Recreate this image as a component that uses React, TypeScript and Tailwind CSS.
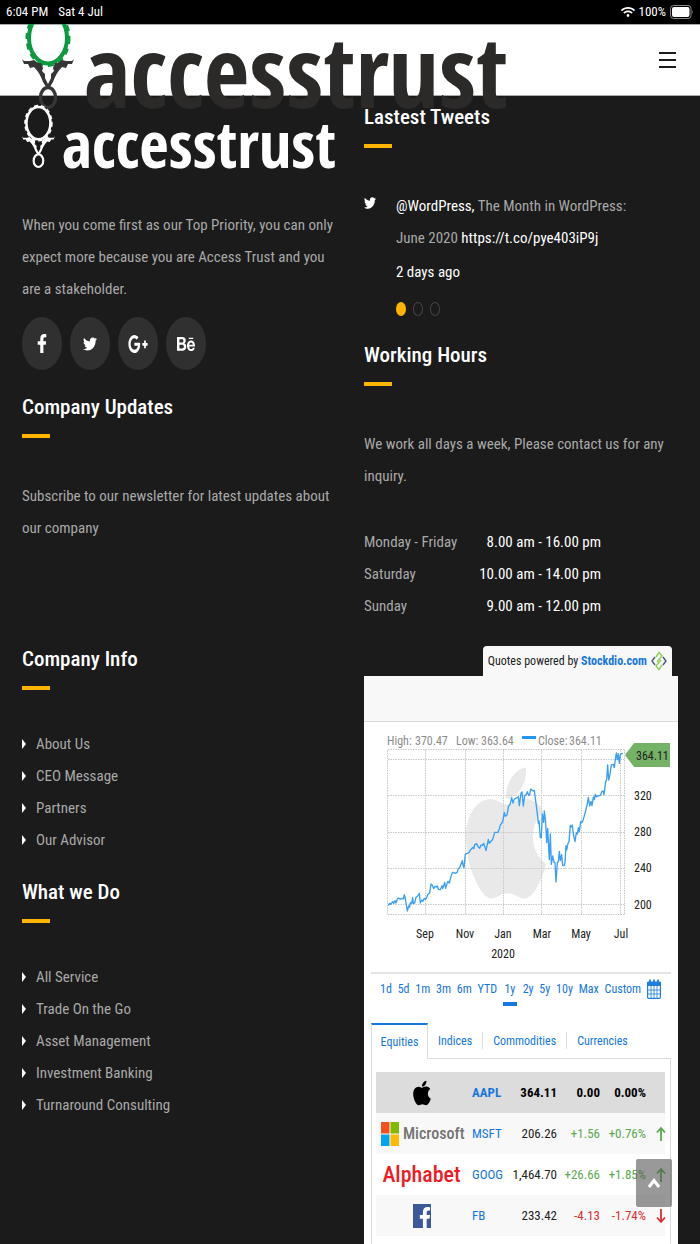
import {
  FaApple,
  FaBehance,
  FaFacebookF,
  FaGooglePlusG,
  FaTwitter,
  FaWifi,
} from "react-icons/fa";
import type { ReactNode } from "react";

type EmblemProps = { ring: string; arms: string; className: string };

function Emblem({ ring, arms, className }: EmblemProps) {
  return (
    <svg viewBox="0 0 52 100" className={className} aria-hidden="true">
      <ellipse cx="26" cy="28" rx="19" ry="25.500" fill="none" stroke={ring} strokeWidth="4" />
      <ellipse cx="26" cy="28" rx="20.500" ry="27" fill="none" stroke={ring} strokeWidth="4" strokeDasharray="6 4.500" />
      <path
        d="M0 49 L2 51 L8 51 L12 50 L16 53 L19 53 L21 58 L20 61 L23 64 L23 68 L26 74 L29 68 L29 64 L32 61 L31 58 L33 53 L36 53 L40 50 L44 51 L50 51 L52 49 L50 54 L46 54 L44 58 L40 57 C36 61 33 66 31 72 L28 77 L26 79 L24 77 L21 72 C19 66 16 61 12 57 L8 58 L6 54 L2 54 Z"
        fill={arms}
      />
      <ellipse cx="26" cy="87.500" rx="7.600" ry="10" fill="none" stroke={arms} strokeWidth="3.400" />
    </svg>
  );
}

function SectionTitle({ children }: { children: ReactNode }) {
  return (
    <div>
      <h2 className="text-[21px] leading-[34px] font-medium text-white">{children}</h2>
      <div className="mt-2.5 h-1 w-7 bg-[#ffb400]" />
    </div>
  );
}

function LinkList({ items }: { items: string[] }) {
  return (
    <ul className="mt-[38px]">
      {items.map((item) => (
        <li key={item} className="leading-8">
          <a href="#" className="flex items-center gap-2.5">
            <svg viewBox="0 0 4 10" className="h-2.5 w-1" aria-hidden="true">
              <path d="M0 0 L4 5 L0 10 Z" fill="#fff" />
            </svg>
            {item}
          </a>
        </li>
      ))}
    </ul>
  );
}

const socials = [
  { name: "Facebook", icon: <FaFacebookF preserveAspectRatio="none" className="h-[19px] w-2.5" /> },
  { name: "Twitter", icon: <FaTwitter preserveAspectRatio="none" className="h-4 w-3.5" /> },
  { name: "Google Plus", icon: <FaGooglePlusG preserveAspectRatio="none" className="h-6 w-5" /> },
  { name: "Behance", icon: <FaBehance preserveAspectRatio="none" className="h-5 w-[18px]" /> },
];

const hours = [
  ["Monday - Friday", "8.00 am - 16.00 pm"],
  ["Saturday", "10.00 am - 14.00 pm"],
  ["Sunday", "9.00 am - 12.00 pm"],
];

const rise =
  "12,481 17,475 20,478 26,470 29,475 33,467 36,474 40,462 44,459 49,463 53,460 58,462 61,449 64,462 67,480 70,498 74,483 77,486 79,473 83,476 86,458 88,475 92,474 96,457 101,453 106,445 109,474 113,465 117,469 121,460 124,463 127,460 132,448 137,444 141,417 145,421 149,431 153,424 157,426 160,423 163,433 169,434 174,422 176,431 182,412 185,430 190,413 192,409 196,414 199,401 204,385 208,382 213,385 219,383 223,371 227,368 235,347 237,360 240,368 244,327 250,325 255,323 260,314 267,307 270,311 272,299 278,296 283,306 287,310 291,300 295,302 299,295 304,309 306,317 313,283 316,295 322,288 326,283 332,262 342,262 347,249 348,242";

const slump =
  "348,242 352,236 356,230 361,202 364,214 369,210 374,182 378,179 383,158 387,174 391,162 395,160 399,158 403,155 406,182 411,144 414,141 418,183 422,151 427,149 430,140 434,151 437,150 440,132 444,136 448,138 451,136 454,161 457,183 460,206 463,236 465,228 469,278 472,278 475,207 479,232 481,198 485,232 488,293 491,250 496,344 499,267 502,358 506,333 510,352 513,353 516,411 520,353 523,350 526,319 529,347 533,329 536,361 540,362 543,353 546,302 548,315 552,295 555,290 559,241 562,246 565,240 568,267 573,290 577,263 580,267 583,248 586,260 590,230 595,232 599,219 603,205 609,181 613,157 617,183 621,169 624,182 628,156 631,164 634,148 637,156 641,152 645,153 650,150 653,140 657,138 660,149 665,110 668,104 671,60 674,105 678,88 682,60 688,58 691,68 694,43 697,24 700,44 703,26 706,55 709,30 712,26 717,26";

const months = [
  [425, "Sep"],
  [465, "Nov"],
  [503, "Jan"],
  [542, "Mar"],
  [581, "May"],
  [621, "Jul"],
] as const;

function PriceChart() {
  return (
    <svg viewBox="364 722 314 250" className="block w-full text-[12px]" role="img" aria-label="AAPL one year price chart">
      <FaApple x="465" y="758" className="h-[150px] w-[82px]" preserveAspectRatio="none" color="#e9e9e9" />
      <g stroke="#c8c8c8" strokeDasharray="1.500 1" fill="none">
        <path d="M388 749.500H625M388 759.500H625M388 795.500H625M388 832.500H625M388 868.500H625M388 904.500H625M388 914.500H625" />
        <path d="M387.500 750V914M425.500 750V914M465.500 750V914M503.500 750V914M541.500 750V914M581.500 750V914M620.500 750V914M624.500 750V914" />
      </g>
      <g transform="translate(384 745) scale(0.33333)" fill="none" stroke="#3b9ff5" strokeWidth="4" strokeLinejoin="round">
        <polyline points={rise} />
        <polyline points={slump} />
      </g>
      <g fill="#8c8c8c">
        <text x="387" y="745">High:</text>
        <text x="415" y="745">370.47</text>
        <text x="456" y="745">Low:</text>
        <text x="481" y="745">363.64</text>
        <path d="M522 736h14v3h-14z" fill="#2196f3" />
        <text x="538" y="745">Close:</text>
        <text x="569" y="745">364.11</text>
      </g>
      <path d="M625 755 L634 743 H670 V767 H634 Z" fill="#74b266" />
      <g fill="#222">
        <text x="636" y="760">364.11</text>
        <text x="634" y="800">320</text>
        <text x="634" y="836">280</text>
        <text x="634" y="872">240</text>
        <text x="634" y="909">200</text>
        {months.map(([x, label]) => (
          <text key={label} x={x} y="938" textAnchor="middle">
            {label}
          </text>
        ))}
        <text x="503" y="958" textAnchor="middle">
          2020
        </text>
      </g>
    </svg>
  );
}

const ranges = ["1d", "5d", "1m", "3m", "6m", "YTD", "1y", "2y", "5y", "10y", "Max", "Custom"];

function CalendarIcon() {
  return (
    <svg viewBox="0 0 14 20" className="h-5 w-3.5" fill="none" stroke="#1e7fe0" aria-hidden="true">
      <path d="M0 3h14v4H0z" fill="#1e7fe0" stroke="none" />
      <rect x="0.600" y="3" width="12.800" height="16.300" rx="1" strokeWidth="1.200" />
      <path d="M4 7v12M7 7v12M10 7v12M1 11h12M1 15h12" strokeWidth="0.800" />
      <path d="M3 0.500v4M11 0.500v4M7 0.500v4" strokeWidth="1.800" />
    </svg>
  );
}

function StockdioMark() {
  return (
    <svg viewBox="0 0 16 20" className="h-5 w-4" fill="none" strokeWidth="1.400" aria-hidden="true">
      <path d="M4 6 L1 10 L4 14 M12 6 L15 10 L12 14" stroke="#47597a" />
      <path d="M5 6 L8 1.500 L11 5 L6 11 M11 14 L8 18.500 L5 15 L10 9" stroke="#8fd14f" />
    </svg>
  );
}

function Arrow({ down = false }: { down?: boolean }) {
  return (
    <svg viewBox="0 0 10 16" className="h-4 w-2.5" fill="none" stroke={down ? "#d63031" : "#5aa94e"} strokeWidth="1.800" aria-label={down ? "Down" : "Up"} role="img">
      {down ? <path d="M5 1V14M1 9.500L5 14L9 9.500" /> : <path d="M5 15V2M1 6.500L5 2L9 6.500" />}
    </svg>
  );
}

function QuoteTable() {
  return (
    <table className="w-full table-fixed text-[13px] whitespace-nowrap text-[#222]">
      <colgroup>
        <col className="w-[91px]" />
        <col className="w-11" />
        <col className="w-[46px]" />
        <col className="w-[43px]" />
        <col className="w-[46px]" />
        <col />
      </colgroup>
      <tbody>
        <tr className="h-[41px] bg-[#dcdcdc] font-bold text-black">
          <td>
            <FaApple preserveAspectRatio="none" className="mx-auto h-7 w-[18px]" />
          </td>
          <td className="pl-[5px] text-[#1577dd]">AAPL</td>
          <td className="text-right">364.11</td>
          <td className="text-right">0.00</td>
          <td className="text-right">0.00%</td>
          <td />
        </tr>
        <tr className="h-[41px] bg-[#f8f8f8]">
          <td>
            <div className="flex items-center gap-1 pl-[5px]">
              <svg viewBox="0 0 18 24" className="h-6 w-[18px] shrink-0" aria-hidden="true">
                <path d="M0 0h8.500v11.500H0z" fill="#f25022" />
                <path d="M9.500 0H18v11.500H9.500z" fill="#7fba00" />
                <path d="M0 12.500h8.500V24H0z" fill="#00a4ef" />
                <path d="M9.500 12.500H18V24H9.500z" fill="#ffb900" />
              </svg>
              <span className="text-[16px] leading-6 font-medium text-[#737373]">Microsoft</span>
            </div>
          </td>
          <td className="pl-[5px] text-[#1577dd]">MSFT</td>
          <td className="text-right">206.26</td>
          <td className="text-right text-[#5aa94e]">+1.56</td>
          <td className="text-right text-[#5aa94e]">+0.76%</td>
          <td className="pl-2.5">
            <Arrow />
          </td>
        </tr>
        <tr className="h-[41px]">
          <td className="text-center text-[22px] leading-6 font-medium text-[#ed1c24]">Alphabet</td>
          <td className="pl-[5px] text-[#1577dd]">GOOG</td>
          <td className="text-right">1,464.70</td>
          <td className="text-right text-[#5aa94e]">+26.66</td>
          <td className="text-right text-[#5aa94e]">+1.85%</td>
          <td className="pl-2.5">
            <Arrow />
          </td>
        </tr>
        <tr className="h-[41px] bg-[#f8f8f8]">
          <td>
            <div className="mx-auto flex h-6 w-[18px] items-end justify-end bg-[#3b5998] text-white">
              <FaFacebookF preserveAspectRatio="none" className="h-[21px] w-3" />
            </div>
          </td>
          <td className="pl-[5px] text-[#1577dd]">FB</td>
          <td className="text-right">233.42</td>
          <td className="text-right text-[#d63031]">-4.13</td>
          <td className="text-right text-[#d63031]">-1.74%</td>
          <td className="pl-2.5">
            <Arrow down />
          </td>
        </tr>
      </tbody>
    </table>
  );
}

function StockWidget() {
  return (
    <section className="mt-6 flex grow flex-col text-[#222]">
      <div className="mr-1.5 flex h-[30px] items-center gap-1 self-end rounded-t-[4px] bg-[#f8f8f8] px-[5px] text-[12px]">
        <span>
          Quotes powered by{" "}
          <a href="#" className="font-bold text-[#1577dd]">
            Stockdio.com
          </a>
        </span>
        <StockdioMark />
      </div>
      <div className="flex grow flex-col bg-white">
        <div className="h-[46px] border-b border-[#d8d8d8] bg-[#f8f8f8]" />
        <PriceChart />
        <div className="mx-[7px] border-t-2 border-[#e4e4e4]" />
        <div className="flex h-[49px] items-start justify-between pt-[5px] pr-[17px] pl-4 text-[12px] leading-5 text-[#1577dd]">
          {ranges.map((range) => (
            <button key={range} className="flex flex-col items-center gap-[3px]">
              {range}
              {range === "1y" && <span className="h-1 w-3.5 bg-[#1577dd]" />}
            </button>
          ))}
          <button aria-label="Pick dates">
            <CalendarIcon />
          </button>
        </div>
        <div className="mx-[7px] flex h-9 text-[12px] text-[#1577dd]" role="tablist">
          <button role="tab" aria-selected="true" className="w-[57px] border-x border-t-2 border-x-[#dcdcdc] border-t-[#1577dd]">
            Equities
          </button>
          <div className="flex grow items-center border-b border-[#dcdcdc]">
            <button role="tab" className="h-[17px] border-r border-[#dcdcdc] px-2.5 leading-4">
              Indices
            </button>
            <button role="tab" className="h-[17px] border-r border-[#dcdcdc] px-2.5 leading-4">
              Commodities
            </button>
            <button role="tab" className="h-[17px] px-2.5 leading-4">
              Currencies
            </button>
          </div>
        </div>
        <div className="mx-[7px] grow border-x border-[#dcdcdc] pt-[13px] pr-[5px] pb-[7px] pl-1">
          <QuoteTable />
        </div>
      </div>
    </section>
  );
}

export default function App() {
  return (
    <div className="flex min-h-screen flex-col bg-[#1b1b1b] font-['Roboto_Condensed','Roboto','Liberation_Sans',sans-serif] text-[15px] text-[#a9a9a9]">
      <div className="relative z-20 flex h-6 items-center justify-between bg-black px-1.5 text-[13px] text-white">
        <div className="flex gap-2.5">
          <span>6:04 PM</span>
          <span>Sat 4 Jul</span>
        </div>
        <div className="flex items-center gap-1">
          <FaWifi className="h-3.5 w-3.5" />
          <span>100%</span>
          <svg viewBox="0 0 24 14" className="h-3.5 w-6" aria-hidden="true">
            <rect x="0.500" y="0.500" width="20.500" height="13" rx="3" fill="none" stroke="#888" />
            <rect x="2" y="2" width="17.500" height="10" rx="2" fill="#fff" />
            <path d="M22 5 q1.500 2 0 4z" fill="#888" />
          </svg>
        </div>
      </div>

      <header className="relative flex h-[72px] items-center justify-end border-t border-b border-[#aaa] bg-white pr-6">
        <a href="#" aria-label="accesstrust home" className="absolute -top-[15px] left-[22px] flex h-[100px] text-[#2b2a29]">
          <Emblem ring="#0a9a3f" arms="#363636" className="h-[100px] w-[52px]" />
          <span className="ml-2.5 font-['Open_Sans_Condensed','Roboto_Condensed',sans-serif] text-[99px] leading-[120px] font-bold">accesstrust</span>
        </a>
        <button aria-label="Open menu" className="flex w-[17px] flex-col gap-[5px]">
          <span className="h-0.5 bg-[#1b1b1b]" />
          <span className="h-0.5 bg-[#1b1b1b]" />
          <span className="h-0.5 bg-[#1b1b1b]" />
        </button>
      </header>

      <main className="relative grid grow grid-cols-2 gap-7 px-[22px]">
        <div className="pt-2">
          <a href="#" aria-label="accesstrust" className="flex h-[66px] text-white">
            <Emblem ring="#fff" arms="#fff" className="h-[66px] w-[34px]" />
            <span className="ml-[7px] font-['Open_Sans_Condensed','Roboto_Condensed',sans-serif] text-[64px] leading-[80px] font-bold">accesstrust</span>
          </a>
          <p className="mt-[39px] leading-8">
            When you come first as our Top Priority, you can only expect more because you are Access Trust and you are a stakeholder.
          </p>
          <div className="mt-3 flex gap-2">
            {socials.map(({ name, icon }) => (
              <a key={name} href="#" aria-label={name} className="flex h-[53px] w-10 items-center justify-center rounded-[50%] bg-[#303030] text-white">
                {icon}
              </a>
            ))}
          </div>
          <div className="mt-5">
            <SectionTitle>Company Updates</SectionTitle>
            <p className="mt-[42px] leading-8">Subscribe to our newsletter for latest updates about our company</p>
          </div>
          <div className="mt-[98px]">
            <SectionTitle>Company Info</SectionTitle>
            <LinkList items={["About Us", "CEO Message", "Partners", "Our Advisor"]} />
          </div>
          <div className="mt-[19px]">
            <SectionTitle>What we Do</SectionTitle>
            <LinkList items={["All Service", "Trade On the Go", "Asset Management", "Investment Banking", "Turnaround Consulting"]} />
          </div>
        </div>

        <div className="flex flex-col pt-1">
          <SectionTitle>Lastest Tweets</SectionTitle>
          <div className="mt-[42px] flex gap-5">
            <FaTwitter preserveAspectRatio="none" className="mt-1.5 h-3.5 w-3 text-white" />
            <div>
              <p className="leading-8">
                <a href="#" className="text-white">@WordPress,</a> The Month in WordPress:
                <br />
                June 2020 <a href="#" className="text-white">https://t.co/pye403iP9j</a>
              </p>
              <p className="mt-0.5 leading-8 text-white">2 days ago</p>
              <div className="mt-3.5 flex gap-[7px]">
                <button aria-label="Tweet 1" className="h-3.5 w-2.5 rounded-[50%] bg-[#ffb400]" />
                <button aria-label="Tweet 2" className="h-3.5 w-2.5 rounded-[50%] border border-[#444]" />
                <button aria-label="Tweet 3" className="h-3.5 w-2.5 rounded-[50%] border border-[#444]" />
              </div>
            </div>
          </div>
          <div className="mt-[22px]">
            <SectionTitle>Working Hours</SectionTitle>
            <p className="mt-[42px] leading-8">We work all days a week, Please contact us for any inquiry.</p>
            <dl className="mt-[34px]">
              {hours.map(([day, time]) => (
                <div key={day} className="flex w-[237px] justify-between leading-8">
                  <dt>{day}</dt>
                  <dd className="text-white">{time}</dd>
                </div>
              ))}
            </dl>
          </div>
          <StockWidget />
        </div>
      </main>

      <button aria-label="Back to top" className="fixed right-7 bottom-[37px] z-20 flex h-12 w-9 items-center justify-center rounded-[2px] bg-[#555]/60">
        <svg viewBox="0 0 12 10" className="h-2.5 w-3" fill="none" stroke="#fff" strokeWidth="3" aria-hidden="true">
          <path d="M1 9 L6 2.500 L11 9" />
        </svg>
      </button>
    </div>
  );
}
